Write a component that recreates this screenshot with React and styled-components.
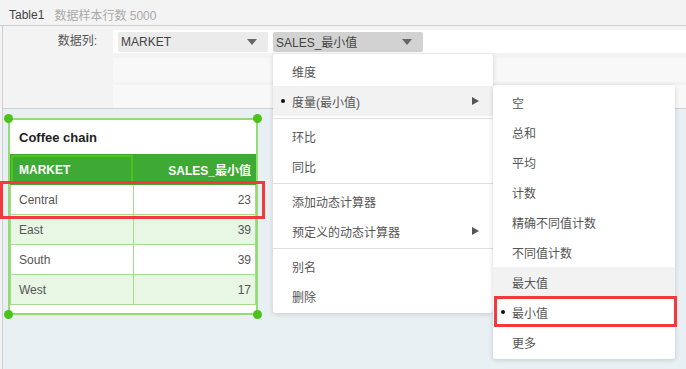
import React from "react";
import styled, { createGlobalStyle } from "styled-components";

const GlobalStyle = createGlobalStyle`
  html, body {
    margin: 0;
    padding: 0;
  }
  body {
    font-family: "Liberation Sans", "Noto Sans CJK SC", sans-serif;
    font-size: 12px;
    color: #555;
    background: #fff;
  }
  * {
    box-sizing: border-box;
  }
`;

const Page = styled.div`
  position: relative;
  width: 686px;
  height: 369px;
  overflow: hidden;
  display: flex;
  flex-direction: column;
  background: #f3f3f3;
`;

const TopBar = styled.div`
  flex-shrink: 0;
  height: 26px;
  padding: 4px 9px 0;
  display: flex;
  align-items: center;
  gap: 10px;
  border-bottom: 1px solid #cfcfcf;
`;

const TableName = styled.span`
  color: #444;
`;

const SampleInfo = styled.span`
  color: #aaa;
`;

const Body = styled.div`
  flex: 1;
  display: flex;
  flex-direction: column;
  margin-left: 2px;
  border-left: 1px solid #cfcfcf;
`;

const ConfigArea = styled.div`
  flex-shrink: 0;
  padding-top: 4px;
  border-bottom: 1px solid #cfcfcf;
`;

const ConfigRow = styled.div`
  display: flex;
  height: 23px;
`;

const FieldLabel = styled.div`
  width: 110px;
  padding-right: 16px;
  text-align: right;
  line-height: 23px;
  color: #555;
`;

const FieldStrip = styled.div`
  flex: 1;
  display: flex;
  align-items: center;
  gap: 5px;
  padding-left: 5px;
  background: #fff;
`;

const Select = styled.div`
  width: 150px;
  height: 20px;
  padding: 0 11px 0 3px;
  display: flex;
  align-items: center;
  justify-content: space-between;
  border-radius: 2px;
  color: #444;
  background: ${(p) => (p.$active ? "#d2d2d2" : "#ebebeb")};
`;

const Caret = styled.span`
  width: 0;
  height: 0;
  border-left: 5px solid transparent;
  border-right: 5px solid transparent;
  border-top: 6px solid #666;
`;

const Slot = styled.div`
  margin-left: 110px;
  margin-top: ${(p) => p.$gap}px;
  height: ${(p) => p.$h}px;
  background: #f8f8f8;
`;

const Canvas = styled.div`
  flex: 1;
  padding: 9px 0 0 5px;
  background: #e9f0f3;
`;

const Widget = styled.div`
  position: relative;
  width: 250px;
  padding-bottom: 8px;
  border: 2px solid #93dc74;
  background: #fff;
`;

const Handle = styled.span`
  position: absolute;
  width: 9px;
  height: 9px;
  border-radius: 50%;
  background: #4cc318;
  ${(p) => (p.$top ? "top: -6px;" : "bottom: -6px;")}
  ${(p) => (p.$left ? "left: -6px;" : "right: -6px;")}
`;

const Title = styled.div`
  height: 34px;
  padding-left: 9px;
  display: flex;
  align-items: center;
  font-size: 13px;
  font-weight: bold;
  color: #222;
`;

const Grid = styled.table`
  width: 100%;
  border-collapse: collapse;
  table-layout: fixed;
`;

const HeadCell = styled.th`
  height: 30px;
  padding: 0 4px 0 8px;
  text-align: ${(p) => p.$align};
  font-weight: bold;
  color: #fff;
  background: #3ea935;
  border: 1px solid #3ea935;
  box-shadow: ${(p) => (p.$selected ? "inset 0 0 0 2px #4cc41e" : "none")};
`;

const Row = styled.tr`
  background: ${(p) => (p.$alt ? "#e8f6e4" : "#fff")};
`;

const Cell = styled.td`
  height: 30px;
  padding: 0 4px 0 8px;
  text-align: ${(p) => p.$align};
  color: #555;
  border: 1px solid #a9d893;
`;

const Mark = styled.div`
  position: absolute;
  left: ${(p) => p.$x}px;
  top: ${(p) => p.$y}px;
  width: ${(p) => p.$w}px;
  height: ${(p) => p.$h}px;
  border: 3px solid #f2393b;
  pointer-events: none;
`;

const Menu = styled.div`
  position: absolute;
  left: ${(p) => p.$x}px;
  top: ${(p) => p.$y}px;
  width: ${(p) => p.$w}px;
  padding: 2px 0;
  background: #fff;
  border-radius: 3px;
  box-shadow: 0 1px 5px rgba(0, 0, 0, 0.16);
`;

const MenuItem = styled.div`
  position: relative;
  height: 30px;
  padding: 0 14px 0 19px;
  display: flex;
  align-items: center;
  color: #555;
  background: ${(p) => (p.$hover ? "#f2f2f2" : "transparent")};
`;

const Bullet = styled.span`
  position: absolute;
  left: 8px;
  top: 13px;
  width: 4px;
  height: 4px;
  border-radius: 50%;
  background: #111;
`;

const Arrow = styled.span`
  margin-left: auto;
  width: 0;
  height: 0;
  border-top: 4px solid transparent;
  border-bottom: 4px solid transparent;
  border-left: 7px solid #555;
`;

const Separator = styled.div`
  height: 1px;
  margin: 2px 0;
  background: #e0e0e0;
`;

const rows = [
  { market: "Central", sales: 23 },
  { market: "East", sales: 39 },
  { market: "South", sales: 39 },
  { market: "West", sales: 17 },
];

const mainMenu = [
  [{ label: "维度" }, { label: "度量(最小值)", checked: true, hover: true, sub: true }],
  [{ label: "环比" }, { label: "同比" }],
  [{ label: "添加动态计算器" }, { label: "预定义的动态计算器", sub: true }],
  [{ label: "别名" }, { label: "删除" }],
];

const aggregations = [
  { label: "空" },
  { label: "总和" },
  { label: "平均" },
  { label: "计数" },
  { label: "精确不同值计数" },
  { label: "不同值计数" },
  { label: "最大值", hover: true },
  { label: "最小值", checked: true },
  { label: "更多" },
];

const Item = ({ item }) => (
  <MenuItem $hover={item.hover}>
    {item.checked && <Bullet />}
    {item.label}
    {item.sub && <Arrow />}
  </MenuItem>
);

const App = () => {
  return (
    <>
      <GlobalStyle />
      <Page>
        <TopBar>
          <TableName>Table1</TableName>
          <SampleInfo>数据样本行数 5000</SampleInfo>
        </TopBar>
        <Body>
          <ConfigArea>
            <ConfigRow>
              <FieldLabel>数据列:</FieldLabel>
              <FieldStrip>
                <Select>
                  MARKET
                  <Caret />
                </Select>
                <Select $active>
                  SALES_最小值
                  <Caret />
                </Select>
              </FieldStrip>
            </ConfigRow>
            <Slot $gap={5} $h={24} />
            <Slot $gap={3} $h={23} />
          </ConfigArea>
          <Canvas>
            <Widget>
              <Handle $top $left />
              <Handle $top />
              <Handle $left />
              <Handle />
              <Title>Coffee chain</Title>
              <Grid>
                <thead>
                  <tr>
                    <HeadCell $align="left" $selected>
                      MARKET
                    </HeadCell>
                    <HeadCell $align="right">SALES_最小值</HeadCell>
                  </tr>
                </thead>
                <tbody>
                  {rows.map((r, i) => (
                    <Row key={r.market} $alt={i % 2 === 1}>
                      <Cell $align="left">{r.market}</Cell>
                      <Cell $align="right">{r.sales}</Cell>
                    </Row>
                  ))}
                </tbody>
              </Grid>
            </Widget>
          </Canvas>
        </Body>

        <Mark $x={0} $y={181} $w={265} $h={38} />

        <Menu $x={273} $y={54} $w={220}>
          {mainMenu.map((group, gi) => (
            <React.Fragment key={gi}>
              {gi > 0 && <Separator />}
              {group.map((item) => (
                <Item key={item.label} item={item} />
              ))}
            </React.Fragment>
          ))}
        </Menu>

        <Menu $x={493} $y={85} $w={182}>
          {aggregations.map((item) => (
            <Item key={item.label} item={item} />
          ))}
        </Menu>

        <Mark $x={494} $y={296} $w={183} $h={31} />
      </Page>
    </>
  );
};

export default App;
